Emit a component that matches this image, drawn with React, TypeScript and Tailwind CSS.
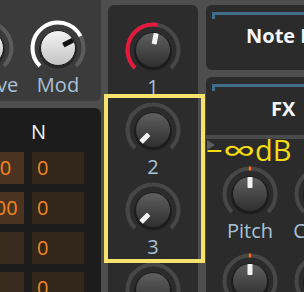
import { useId } from 'react';

type KnobProps = {
  value: number;
  arc?: string;
  ring?: string;
  light?: boolean;
  tick?: boolean;
};

function Knob({ value, arc = '#ffffff', ring = '#474747', light = false, tick = false }: KnobProps) {
  const id = useId().replace(/:/g, '');
  const cx = 30;
  const cy = 30;
  const r = 25.5;
  const pt = (deg: number) => {
    const a = (deg * Math.PI) / 180;
    return [cx + r * Math.sin(a), cy - r * Math.cos(a)];
  };
  const arcPath = (a0: number, a1: number) => {
    const [x0, y0] = pt(a0);
    const [x1, y1] = pt(a1);
    const large = a1 - a0 > 180 ? 1 : 0;
    return `M${x0} ${y0} A${r} ${r} 0 ${large} 1 ${x1} ${y1}`;
  };
  const ang = -135 + 270 * value;

  return (
    <svg width="60" height="60" viewBox="0 0 60 60" className="block">
      <defs>
        <linearGradient id={`g${id}`} x1="0" y1="0" x2="0" y2="1">
          {light ? (
            <>
              <stop offset="0" stopColor="#f4f4f4" />
              <stop offset="1" stopColor="#c2c2c2" />
            </>
          ) : (
            <>
              <stop offset="0" stopColor="#606060" />
              <stop offset="1" stopColor="#2e2e2e" />
            </>
          )}
        </linearGradient>
      </defs>
      <path d={arcPath(-135, 135)} stroke={ring} strokeWidth="4" fill="none" />
      {/* bipolar knobs only show the orange zero tick, no value arc */}
      {!tick && value > 0.01 && <path d={arcPath(-135, ang)} stroke={arc} strokeWidth="4" fill="none" />}
      {tick && <rect x="28.8" y="2.5" width="2.4" height="4" fill="#ff6d12" />}
      <circle cx="30" cy="31.5" r="19" fill="rgba(0,0,0,0.35)" />
      <circle cx="30" cy="30" r="17.5" fill={`url(#g${id})`} stroke="#1b1b1b" strokeWidth="1" />
      <g transform={`rotate(${ang} 30 30)`}>
        <rect x="27.5" y="13" width="5" height="11" rx="0.8" fill={light ? '#111111' : '#f2f2f2'} />
      </g>
    </svg>
  );
}

function KnobItem({ label, h, ...k }: KnobProps & { label?: string; h: string }) {
  return (
    <div className={`flex w-[72px] shrink-0 flex-col items-center ${h}`}>
      <Knob {...k} />
      {label && <div className="-mt-[3px] text-[20px] leading-[20px] text-[#a8c2d8] whitespace-nowrap">{label}</div>}
    </div>
  );
}

function Corner() {
  return <div className="ml-[6px] mt-[7px] h-[7px] border-l-[3px] border-t-[3px] border-[#3f6d8a]" />;
}

const cells = [
  { a: '100', b: '0', bright: true },
  { a: '-100', b: '0', bright: true },
  { a: '', b: '0', bright: false },
  { a: '', b: '0', bright: false },
];

export default function App() {
  return (
    <div className="relative flex h-[292px] w-[304px] items-start overflow-hidden bg-[#4e4e4e] font-['Open_Sans',sans-serif]">
      {/* left column */}
      <div className="-ml-[30px] -mt-[10px] flex w-[131px] shrink-0 flex-col gap-[7px]">
        <div className="flex h-[111px] overflow-hidden rounded-[6px] bg-[#3b3b3b] pt-[28px]">
          <div className="-ml-[20px] flex">
            <KnobItem h="h-[80px]" label="Octave" value={0.2} light ring="#5c5c5c" />
            <KnobItem h="h-[80px]" label="Mod" value={0.73} light ring="#5c5c5c" />
          </div>
        </div>
        <div className="h-[200px] rounded-[6px] bg-[#1c1c1c] pl-[2px] pt-[12px]">
          <div className="grid grid-cols-[52px_52px] gap-x-[8px] gap-y-[8px]">
            <div />
            <div className="-ml-[1px] h-[24px] text-[20px] leading-[24px] text-[#eef3f8]">N</div>
            {cells.map((c, i) => [
              <div
                key={`a${i}`}
                className={`flex h-[32px] items-center pl-[5px] text-[20px] text-[#f5861f] ${c.bright ? 'bg-[#4a3421]' : 'bg-[#3a2b1f]'}`}
              >
                {c.a}
              </div>,
              <div key={`b${i}`} className="flex h-[32px] items-center bg-[#33271c] pl-[5px] text-[20px] text-[#f5861f]">
                {c.b}
              </div>,
            ])}
          </div>
        </div>
      </div>

      {/* middle column */}
      <div className="ml-[7px] mt-[5px] flex h-[300px] w-[90px] shrink-0 flex-col items-center rounded-[6px] bg-[#2c2c2c] pt-[15px]">
        <KnobItem h="h-[80px]" label="1" value={0.54} arc="#e5193d" />
        <KnobItem h="h-[80px]" label="2" value={0} />
        <KnobItem h="h-[80px]" label="3" value={0} />
        <KnobItem h="h-[80px]" value={0} />
      </div>

      {/* right column */}
      <div className="ml-[8px] mt-[5px] flex w-[120px] shrink-0 flex-col gap-[7px]">
        <div className="h-[65px] rounded-[6px] bg-[#2b2b2b]">
          <Corner />
          <div className="mt-[5px] whitespace-nowrap pl-[40px] text-[20px] font-bold leading-[24px] text-[#f4f8fb]">Note FX</div>
        </div>
        <div className="h-[260px] rounded-[6px] bg-[#2b2b2b]">
          <Corner />
          <div className="mt-[6px] whitespace-nowrap pl-[65px] text-[20px] font-bold leading-[24px] text-[#f4f8fb]">FX</div>
          <div className="relative mt-[14px] h-[29px]">
            <div className="mt-[10px] h-[4px] bg-[#4a4a4a]" />
            <div className="absolute left-[1px] top-[5px] h-0 w-0 border-y-[5px] border-l-[8px] border-y-transparent border-l-[#5e5e5e]" />
            <div className="absolute left-[0px] top-[0px] whitespace-nowrap text-[29px] leading-[29px] text-[#f2dc14]">
              −<span className="mx-[6px] inline-block scale-x-[1.6] scale-y-[1.1]">∞</span>dB
            </div>
          </div>
          <div className="flex pl-[8px]">
            <KnobItem h="h-[87px]" label="Pitch" value={0.5} tick />
            <KnobItem h="h-[87px]" label="Cutoff" value={0.5} tick />
          </div>
          <div className="flex pl-[8px]">
            <KnobItem h="h-[87px]" value={0.5} tick />
            <KnobItem h="h-[87px]" value={0.5} tick />
          </div>
        </div>
      </div>

      {/* selection highlight */}
      <div className="absolute left-[104px] top-[94px] h-[169px] w-[101px] border-[4px] border-[#f6e36e]" />
    </div>
  );
}
